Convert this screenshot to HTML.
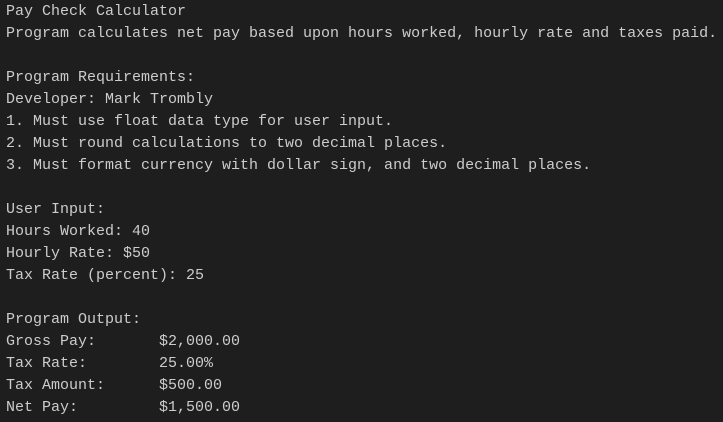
<!DOCTYPE html>
<html><head><style>
html,body{margin:0;padding:0;background:#1e1e1e;width:723px;height:422px;overflow:hidden}
pre{margin:0;position:absolute;left:6px;top:1px;font-family:"Liberation Mono",monospace;font-size:15px;line-height:22px;color:#cccccc;letter-spacing:0px}
</style></head><body>
<pre>Pay Check Calculator
Program calculates net pay based upon hours worked, hourly rate and taxes paid.

Program Requirements:
Developer: Mark Trombly
1. Must use float data type for user input.
2. Must round calculations to two decimal places.
3. Must format currency with dollar sign, and two decimal places.

User Input:
Hours Worked: 40
Hourly Rate: $50
Tax Rate (percent): 25

Program Output:
Gross Pay:       $2,000.00
Tax Rate:        25.00%
Tax Amount:      $500.00
Net Pay:         $1,500.00</pre>
</body></html>
